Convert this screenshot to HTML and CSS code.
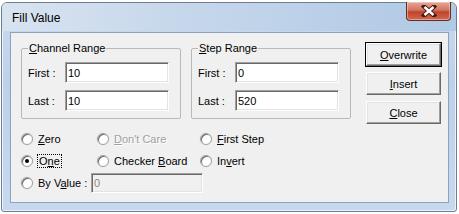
FILE: index.html
```html
<html lang="en">
<head>
    <meta charset="UTF-8">
    <title>Fill Value</title>
    <link rel="stylesheet" href="styles.css">
</head>
<body>
    <div class="window">
        <div class="titlebar">
            <span class="title">Fill Value</span>
            <button class="close-x" aria-label="Close">
                <svg width="16" height="12" viewBox="0 0 16 12">
                    <path d="M3 1.5 L13 10.5 M13 1.5 L3 10.5" stroke="#4a1a14" stroke-width="4.4" fill="none" stroke-linecap="square"/>
                    <path d="M3.5 2 L12.5 10 M12.5 2 L3.5 10" stroke="#fff" stroke-width="2.4" fill="none"/>
                </svg>
            </button>
        </div>
        <div class="client">
            <div class="top">
                <fieldset class="group">
                    <legend><u>C</u>hannel Range</legend>
                    <div class="row"><label>First :</label><input class="field" value="10"></div>
                    <div class="row"><label>Last :</label><input class="field" value="10"></div>
                </fieldset>
                <fieldset class="group">
                    <legend><u>S</u>tep Range</legend>
                    <div class="row"><label>First :</label><input class="field" value="0"></div>
                    <div class="row"><label>Last :</label><input class="field" value="520"></div>
                </fieldset>
                <div class="buttons">
                    <button class="btn default"><u>O</u>verwrite</button>
                    <button class="btn"><u>I</u>nsert</button>
                    <button class="btn"><u>C</u>lose</button>
                </div>
            </div>
            <div class="options">
                <div class="opt-row">
                    <span class="opt c1"><i class="radio"></i><span><u>Z</u>ero</span></span>
                    <span class="opt c2 disabled"><i class="radio"></i><span><u>D</u>on't Care</span></span>
                    <span class="opt c3"><i class="radio"></i><span><u>F</u>irst Step</span></span>
                </div>
                <div class="opt-row">
                    <span class="opt c1"><i class="radio checked"></i><span class="focus">O<u>n</u>e</span></span>
                    <span class="opt c2"><i class="radio"></i><span>Checker <u>B</u>oard</span></span>
                    <span class="opt c3"><i class="radio"></i><span>In<u>v</u>ert</span></span>
                </div>
                <div class="opt-row">
                    <span class="opt c1 by"><i class="radio"></i><span>By V<u>a</u>lue :</span></span>
                    <input class="field value-box" value="0" disabled>
                </div>
            </div>
        </div>
    </div>
</body>
</html>
```

FILE: styles.css
```css
body {
    margin: 0;
    background: #fff;
    font-family: 'Liberation Sans', Arial, sans-serif;
    font-size: 11px;
    color: #000;
}
.window {
    margin: 2px 0 0 1px;
    width: 454px;
    height: 208px;
    border: 1px solid #6e7e90;
    border-radius: 6px 6px 3px 3px;
    background: linear-gradient(to bottom, #c9daee, #bcd1ea 40%, #c6d9ef);
    box-shadow: inset 1px 1px 0 #eef4fb, inset -1px -1px 0 #eaf1f9;
}
.titlebar {
    height: 28px;
    display: flex;
    align-items: flex-start;
    justify-content: space-between;
    background: linear-gradient(to right, #d8e3f0, #c6d7eb 40%, #b0c9e5);
    border-radius: 5px 5px 0 0;
}
.title {
    font-size: 12px;
    margin: 8px 0 0 10px;
    color: #000;
}
.close-x {
    width: 45px;
    height: 19px;
    margin: -1px 5px 0 0;
    padding: 0;
    border: 1px solid #6b2a20;
    border-top: none;
    border-radius: 0 0 4px 4px;
    background: linear-gradient(to bottom, #e6a898, #d27460 45%, #c0422c 55%, #cf6a4e);
    display: flex;
    align-items: center;
    justify-content: center;
    box-shadow: inset 0 0 0 1px rgba(255, 220, 210, 0.5);
}
.client {
    margin: 1px 7px 0 8px;
    height: 171px;
    border: 1px solid #8ea2ba;
    background: #f0f0f0;
    padding: 9px 0 0 10px;
    box-sizing: border-box;
}
.top {
    display: flex;
    align-items: flex-start;
}
.group {
    width: 160px;
    box-sizing: border-box;
    margin: 0 10px 0 0;
    padding: 0 10px 7px 6px;
    border: 1px solid #b9b9b9;
    border-radius: 2px;
}
.group legend {
    padding: 0 1px;
    margin-left: 0;
    line-height: 13px;
}
.row {
    display: flex;
    align-items: center;
    margin-top: 7px;
}
.row label {
    width: 37px;
}
.field {
    width: 104px;
    height: 21px;
    box-sizing: border-box;
    font: 11px 'Liberation Sans', Arial, sans-serif;
    padding: 0 0 0 2px;
    background: #fff;
    border: 1px solid;
    border-color: #a0a0a0 #fff #fff #a0a0a0;
    box-shadow: inset 1px 1px 0 #696969, inset -1px -1px 0 #e3e3e3;
    outline: none;
}
.buttons {
    display: flex;
    flex-direction: column;
    gap: 6px;
    margin: 1px 0 0 5px;
}
.btn {
    width: 75px;
    height: 23px;
    font: 11px 'Liberation Sans', Arial, sans-serif;
    background: #f0f0f0;
    border: 1px solid;
    border-color: #fff #696969 #696969 #fff;
    box-shadow: inset -1px -1px 0 #a0a0a0, inset 1px 1px 0 #e3e3e3;
    padding: 0;
}
.btn.default {
    outline: 1px solid #000;
}
.options {
    margin-top: 4px;
}
.opt-row {
    display: flex;
    align-items: center;
    height: 22px;
}
.opt {
    display: flex;
    align-items: center;
    white-space: nowrap;
}
.c1 { width: 76px; }
.c2 { width: 103px; }
.radio {
    width: 12px;
    height: 12px;
    box-sizing: border-box;
    border-radius: 50%;
    background: #fff;
    border: 1px solid #a0a0a0;
    box-shadow: inset 1px 1px 0 #696969, 0 0 0 0.5px #e3e3e3;
    margin-right: 5px;
    display: inline-flex;
    align-items: center;
    justify-content: center;
}
.radio.checked::after {
    content: "";
    width: 4px;
    height: 4px;
    border-radius: 50%;
    background: #000;
}
.disabled {
    color: #a0a0a0;
    text-shadow: 1px 1px 0 #fff;
}
.focus {
    outline: 1px dotted #000;
    outline-offset: 0;
    padding: 0 1px;
}
.by {
    width: 70px;
}
.value-box {
    height: 20px;
    width: 112px;
    background: #f0f0f0;
    color: #888;
}
```
